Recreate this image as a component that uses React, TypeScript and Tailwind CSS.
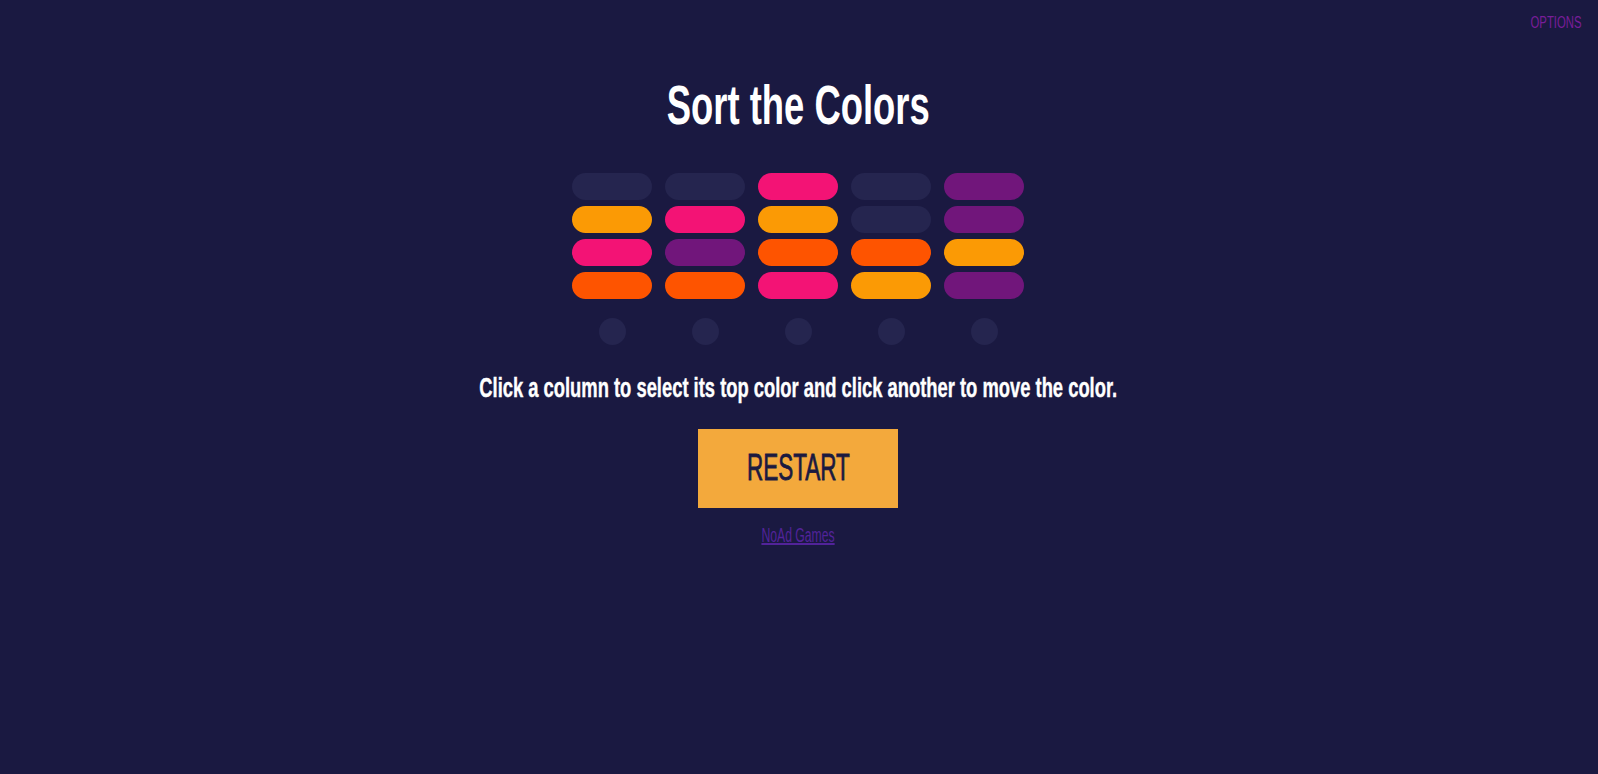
import * as React from "react"

type Slot = "empty" | "orange" | "pink" | "purple" | "red"

const slotClass: Record<Slot, string> = {
  empty: "bg-[#25254f]",
  orange: "bg-[#fb9a05]",
  pink: "bg-[#f31375]",
  purple: "bg-[#71167b]",
  red: "bg-[#fe5400]",
}

// top to bottom
const columns: Slot[][] = [
  ["empty", "orange", "pink", "red"],
  ["empty", "pink", "purple", "red"],
  ["pink", "orange", "red", "pink"],
  ["empty", "empty", "red", "orange"],
  ["purple", "purple", "orange", "purple"],
]

const font = { fontFamily: '"Liberation Sans", Arial, sans-serif' }

export default function App() {
  return (
    <div className="min-h-screen w-full bg-[#1a1941] flex flex-col" style={font}>
      {/* top bar */}
      <div className="flex justify-end pt-[15px] pr-[16px]">
        <a className="block text-[16.8px] leading-none text-[#791d99] scale-x-[0.675] origin-right cursor-pointer">
          OPTIONS
        </a>
      </div>

      <main className="flex flex-col items-center pr-[2px]">
        <h1 className="mt-[45px] text-[56px] leading-none font-bold text-white scale-x-[0.65]">
          Sort the Colors
        </h1>

        {/* board */}
        <div className="mt-[40px] flex gap-[13px]">
          {columns.map((col, i) => (
            <div key={i} className="flex flex-col items-center cursor-pointer">
              <div className="flex flex-col gap-[6px]">
                {col.map((s, j) => (
                  <div key={j} className={`w-[80px] h-[27px] rounded-full ${slotClass[s]}`} />
                ))}
              </div>
              <div className="mt-[19px] w-[27px] h-[27px] rounded-full bg-[#25254f]" />
            </div>
          ))}
        </div>

        <p className="mt-[29px] text-[28px] leading-none font-bold text-white whitespace-nowrap scale-x-[0.656] [-webkit-text-stroke:0.4px_white]">
          Click a column to select its top color and click another to move the color.
        </p>

        <button className="mt-[27px] w-[200px] h-[79px] bg-[#f3a93c] flex items-center justify-center">
          <span className="block text-[36px] leading-none text-[#1b1a40] scale-x-[0.625] [-webkit-text-stroke:0.8px_#1b1a40]">
            RESTART
          </span>
        </button>

        <a className="mt-[17px] block text-[20px] leading-none text-[#52239a] underline scale-x-[0.61] cursor-pointer">
          NoAd Games
        </a>
      </main>
    </div>
  )
}
